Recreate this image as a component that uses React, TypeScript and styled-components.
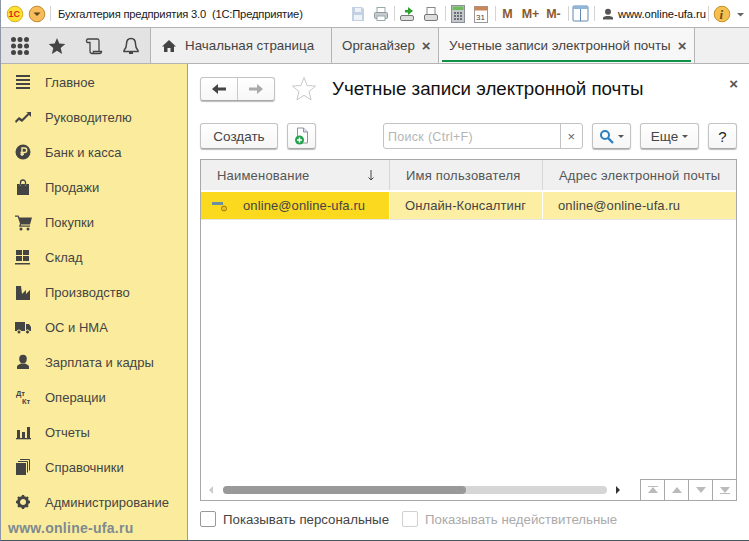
import React from "react";
import styled, { createGlobalStyle } from "styled-components";

const Global = createGlobalStyle`
  html, body { margin: 0; padding: 0; background: #fff; }
  * { box-sizing: border-box; }
  body { font-family: "Liberation Sans", Arial, sans-serif; }
`;

const Window = styled.div`
  position: relative;
  width: 749px;
  height: 541px;
  display: flex;
  flex-direction: column;
  overflow: hidden;
  background: #fff;
  border-left: 1px solid #8d97a8;
  border-bottom: 1px solid #44565f;
`;

const TitleBar = styled.div`
  height: 27px;
  display: flex;
  align-items: center;
  flex: none;
  position: relative;
  background: #fff;
`;
const TitleText = styled.span`
  font-size: 11.2px;
  color: #1a1a1a;
  white-space: pre;
  margin-left: 3px;
  width: 292px;
  letter-spacing: -0.19px;
`;
const Sep = styled.i<{ $l: number; $r: number }>`
  width: 1px;
  height: 15px;
  background: #d4d4d4;
  margin: 0 ${(p) => p.$r}px 0 ${(p) => p.$l}px;
  flex: none;
`;
const Gap = styled.i<{ $w: number }>`
  width: ${(p) => p.$w}px;
  flex: none;
`;
const TIcon = styled.svg`
  flex: none;
  display: block;
`;
const Mem = styled.b`
  font-size: 12.5px;
  color: #8a5a2f;
  font-weight: 700;
  width: 23px;
  text-align: center;
  flex: none;
`;
const UserName = styled.span`
  font-size: 11.2px;
  color: #111;
  margin-left: 4px;
  width: 85px;
  white-space: nowrap;
  letter-spacing: -0.06px;
`;

const TabBar = styled.div`
  height: 37px;
  flex: none;
  display: flex;
  background: #f0f0f0;
  border-top: 1px solid #b4b4b4;
  border-bottom: 1px solid #b4b4b4;
`;
const QuickIcons = styled.div`
  width: 150px;
  flex: none;
  background: #e3e3e3;
  border-right: 1px solid #b4b4b4;
  display: flex;
  align-items: center;
  padding-left: 10px;
  gap: 19px;
`;
const Tab = styled.div<{ $w: number; $active?: boolean }>`
  position: relative;
  width: ${(p) => p.$w}px;
  flex: none;
  display: flex;
  align-items: center;
  border-right: 1px solid #b4b4b4;
  padding-left: 10px;
  font-size: 13.35px;
  color: #444;
  background: ${(p) => (p.$active ? "#f7f7f7" : "transparent")};
  white-space: nowrap;
  &::after {
    content: "";
    display: ${(p) => (p.$active ? "block" : "none")};
    position: absolute;
    left: 3px;
    right: 3px;
    bottom: 1px;
    height: 2px;
    background: #0f9148;
  }
`;
const TabLabel = styled.span`
  margin-left: 8px;
`;
const TabClose = styled.span`
  margin-left: 7px;
  font-size: 15px;
  color: #555;
  font-weight: 700;
  line-height: 1;
`;

const Body = styled.div`
  flex: 1;
  display: flex;
  min-height: 0;
`;
const Sidebar = styled.nav`
  width: 187px;
  flex: none;
  background: #fbec9d;
  border-right: 1px solid #b7a62e;
  padding-top: 1px;
  display: flex;
  flex-direction: column;
`;
const NavRow = styled.div`
  height: 35px;
  flex: none;
  display: flex;
  align-items: center;
  font-size: 13px;
  color: #444;
  white-space: nowrap;
`;
const NavIcon = styled.span`
  width: 44px;
  flex: none;
  display: flex;
  justify-content: flex-start;
  padding-left: 14px;
`;
const Watermark = styled.div`
  position: absolute;
  left: 7px;
  bottom: 4px;
  font-size: 14px;
  font-weight: 700;
  color: #7d8a90;
  letter-spacing: 0.28px;
`;

const Main = styled.main`
  flex: 1;
  min-width: 0;
  padding: 13px 11px 0 12px;
  display: flex;
  flex-direction: column;
  position: relative;
`;
const Head = styled.div`
  height: 24px;
  display: flex;
  align-items: center;
  flex: none;
`;
const NavGroup = styled.div`
  display: flex;
  width: 75px;
  height: 24px;
  border: 1px solid #c3c3c3;
  border-bottom-color: #a9a9a9;
  border-radius: 3px;
  box-shadow: 0 1px 1px #bbb;
  background: linear-gradient(#fff, #f7f7f7);
`;
const NavPart = styled.div`
  flex: 1;
  display: flex;
  align-items: center;
  justify-content: center;
  & + & {
    border-left: 1px solid #c9c9c9;
  }
`;
const StarSlot = styled.div`
  margin-left: 17px;
`;
const Title = styled.h1`
  margin: 0 0 0 16px;
  font-size: 18.75px;
  font-weight: 400;
  color: #111;
  white-space: nowrap;
`;
const CloseForm = styled.span`
  position: absolute;
  right: 11px;
  top: 12px;
  font-size: 15px;
  font-weight: 700;
  color: #555;
  line-height: 1;
`;
const Toolbar = styled.div`
  margin-top: 22px;
  height: 26px;
  display: flex;
  align-items: stretch;
  flex: none;
`;
const Btn = styled.div<{ $w: number; $ml?: number; $strong?: boolean }>`
  width: ${(p) => p.$w}px;
  margin-left: ${(p) => p.$ml ?? 0}px;
  flex: none;
  border: 1px solid #c3c3c3;
  border-bottom-color: #a9a9a9;
  border-radius: 3px;
  box-shadow: 0 1px 1px #bbb;
  background: linear-gradient(#fff, #f6f6f6);
  display: flex;
  align-items: center;
  justify-content: center;
  gap: 4px;
  font-size: ${(p) => (p.$strong ? 15 : 13.5)}px;
  color: ${(p) => (p.$strong ? "#222" : "#444")};
`;
const Caret = styled.i`
  width: 0;
  height: 0;
  border-left: 3px solid transparent;
  border-right: 3px solid transparent;
  border-top: 3px solid #555;
  margin-top: 1px;
`;
const Search = styled.div`
  width: 200px;
  margin-left: 67px;
  flex: none;
  border: 1px solid #c3c3c3;
  border-radius: 3px;
  display: flex;
  font-size: 12.5px;
  color: #b5b5b5;
  letter-spacing: 0.3px;
`;
const SearchInput = styled.div`
  flex: 1;
  display: flex;
  align-items: center;
  padding: 2px 0 0 4px;
  border-right: 1px solid #c3c3c3;
`;
const SearchClear = styled.div`
  width: 21px;
  flex: none;
  display: flex;
  align-items: center;
  justify-content: center;
  padding-top: 1px;
  color: #666;
  font-size: 13px;
`;
const TableBox = styled.div`
  margin-top: 10px;
  width: 537px;
  height: 342px;
  flex: none;
  border: 1px solid #a8a8a8;
  display: flex;
  flex-direction: column;
`;
const HeadRow = styled.div`
  height: 31px;
  flex: none;
  display: grid;
  grid-template-columns: 188px 153px 1fr;
  background: #f0f0f0;
  border-bottom: 1px solid #fff;
`;
const HeadCell = styled.div`
  display: flex;
  align-items: center;
  justify-content: space-between;
  padding: 0 13px 0 16px;
  font-size: 13px;
  letter-spacing: 0.2px;
  color: #555;
  white-space: nowrap;
  & + & {
    border-left: 1px solid #d8d8d8;
  }
`;
const DataRow = styled.div`
  height: 28px;
  flex: none;
  display: grid;
  grid-template-columns: 188px 153px 1fr;
  margin-top: 1px;
  border-bottom: 1px solid #e6e6e6;
`;
const DataCell = styled.div<{ $current?: boolean }>`
  display: flex;
  align-items: center;
  background: ${(p) => (p.$current ? "#fbd91f" : "#fcefa4")};
  padding-left: ${(p) => (p.$current ? 11 : 15)}px;
  font-size: 13px;
  letter-spacing: 0.1px;
  color: #444;
  white-space: nowrap;
  border-left: ${(p) => (p.$current ? "0" : "1px solid #fff")};
`;
const RowIconText = styled.span`
  margin-left: 15px;
`;
const TableFill = styled.div`
  flex: 1;
`;
const TableBottom = styled.div`
  height: 21px;
  flex: none;
  display: flex;
  align-items: center;
`;
const ScrollArea = styled.div`
  flex: 1;
  display: flex;
  align-items: center;
  padding-left: 8px;
  gap: 9px;
`;
const ScrollTrack = styled.div`
  width: 384px;
  height: 8px;
  background: #d6d6d6;
  border-radius: 4px;
  flex: none;
`;
const ScrollThumb = styled.div`
  width: 243px;
  height: 8px;
  background: #999;
  border-radius: 4px;
`;
const PagerBtn = styled.div`
  width: 24px;
  height: 21px;
  flex: none;
  border-left: 1px solid #a8a8a8;
  border-top: 1px solid #a8a8a8;
  display: flex;
  align-items: center;
  justify-content: center;
`;
const Filters = styled.div`
  margin-top: 10px;
  display: flex;
  align-items: center;
  font-size: 13.25px;
  color: #444;
`;
const Check = styled.label<{ $off?: boolean }>`
  display: flex;
  align-items: center;
  gap: 7px;
  margin-right: 13px;
  color: ${(p) => (p.$off ? "#aaa" : "#444")};
  white-space: nowrap;
  &::before {
    content: "";
    width: 14px;
    height: 14px;
    border: 1px solid ${(p) => (p.$off ? "#d0d0d0" : "#999")};
    border-radius: 2px;
    background: #fff;
  }
`;

const C = "#444";
const Ico = ({ w = 18, h = 16, children }: { w?: number; h?: number; children: React.ReactNode }) => (
  <TIcon width={w} height={h} viewBox={`0 0 ${w} ${h}`}>{children}</TIcon>
);

const navItems: [string, React.ReactNode][] = [
  ["Главное", <g fill={C}><rect x="1" y="1" width="14" height="2" /><rect x="1" y="5" width="14" height="2" /><rect x="1" y="9" width="14" height="2" /><rect x="1" y="13" width="14" height="2" /></g>],
  ["Руководителю", <path d="M0 12l4-4 3 2 6-6-2-1h5v5l-2-2-7 7-3-2-3 3z" fill={C} />],
  ["Банк и касса", <g><circle cx="8" cy="8" r="7.5" fill={C} /><path d="M7 12V4h2.5a2 2 0 010 4.5H5.5M5.5 10.3H9" stroke="#fbec9d" strokeWidth="1.4" fill="none" /></g>],
  ["Продажи", <g><path d="M2 5h2.500l1 2 .8-2h3.400l.8 2 1-2H14v11H2z" fill={C} /><path d="M5.500 6V3.500a2.500 2.500 0 015 0V6" stroke={C} strokeWidth="1.300" fill="none" /></g>],
  ["Покупки", <g fill={C}><path d="M0 1.500h3.500l1 2H17l-2 7H6l-.3 1h9.300v1.200H4L5 9.500 2.700 2.700H0z" /><circle cx="6" cy="15" r="1.500" /><circle cx="13" cy="15" r="1.500" /></g>],
  ["Склад", <g fill={C}><rect x="1" y="1" width="6" height="5" /><rect x="8" y="1" width="6" height="5" /><rect x="1" y="7" width="6" height="5" /><rect x="8" y="7" width="6" height="5" /><rect x="0" y="14" width="15" height="1.5" /></g>],
  ["Производство", <path d="M1 16V2h5l1 8 4-4v4l4-4v10z" fill={C} />],
  ["ОС и НМА", <g fill={C}><rect x="0" y="3" width="10" height="9" /><path d="M11 5h3l2 3v4h-5z" /><circle cx="4" cy="13" r="2" stroke="#fbec9d" /><circle cx="12.5" cy="13" r="2" stroke="#fbec9d" /></g>],
  ["Зарплата и кадры", <g fill={C}><ellipse cx="8" cy="5" rx="3.8" ry="4.2" /><path d="M2 15v-2.500c0-1.500 3-2.500 4-3h4c1 .5 4 1.500 4 3V15z" /></g>],
  ["Операции", <g fill={C}><text x="1" y="7" fontSize="7.5" fontWeight="700" fontFamily="Liberation Sans">Дт</text><text x="7" y="15" fontSize="7.5" fontWeight="700" fontFamily="Liberation Sans">Кт</text></g>],
  ["Отчеты", <g fill={C}><rect x="2" y="6" width="3" height="8" /><rect x="7" y="8" width="3" height="6" /><rect x="12" y="3" width="3" height="11" /><rect x="1" y="14" width="15" height="1.300" /></g>],
  ["Справочники", <g><rect x="1" y="4" width="10" height="12" fill={C} /><path d="M3 2.500h9.500v11M5 .5h9.500v11" stroke={C} fill="none" /></g>],
  ["Администрирование", <g><circle cx="8" cy="8" r="4.500" fill="none" stroke={C} strokeWidth="3" /><path d="M8 1v14M1 8h14M3 3l10 10M13 3L3 13" stroke={C} strokeWidth="2.400" strokeDasharray="2.600 8.800" /></g>],
];

export default function App() {
  return (
    <Window>
      <Global />
      <TitleBar>
        <Gap $w={5} />
        <Ico w={18} h={18}>
          <circle cx="9" cy="9" r="7.800" fill="#ffe135" stroke="#d8b020" />
          <text x="2.500" y="12" fontSize="9" fontWeight="700" fill="#e0261c" fontFamily="Liberation Sans">1С</text>
        </Ico>
        <Gap $w={4} />
        <Ico w={18} h={18}>
          <circle cx="9" cy="9" r="7.800" fill="#f7bd5a" stroke="#c48a30" />
          <path d="M5.500 7.500h7L9 11z" fill="#5a4020" />
        </Ico>
        <Sep $l={4} $r={4} />
        <TitleText>Бухгалтерия предприятия 3.0  (1С:Предприятие)</TitleText>
        <Ico w={16} h={16}><path d="M2 1h10l2 2v12H2z" fill="#c3d1e3" /><rect x="5" y="2" width="6" height="4" fill="#eef3f8" /><rect x="4" y="9" width="8" height="5" fill="#eef3f8" /></Ico>
        <Gap $w={7} />
        <Ico w={16} h={16}><rect x="4" y="1.500" width="8" height="5" fill="#fff" stroke="#9aa" /><rect x="1.500" y="6.500" width="13" height="6" rx="1" fill="#c8ccd0" stroke="#8f979c" /><rect x="4" y="10" width="8" height="4.500" fill="#fff" stroke="#9aa" /></Ico>
        <Sep $l={5} $r={3} />
        <Ico w={18} h={16}><path d="M7 4h3V1l5 4-5 4V6.500H7z" fill="#2ea02e" /><rect x="2.500" y="9.500" width="13" height="5" rx="1.500" fill="#ddd" stroke="#777" /></Ico>
        <Gap $w={6} />
        <Ico w={18} h={16}><rect x="5" y="1.500" width="8" height="8" fill="#fff" stroke="#888" /><rect x="2.500" y="8.500" width="13" height="6" rx="1.500" fill="#ddd" stroke="#777" /></Ico>
        <Sep $l={5} $r={5} />
        <Ico w={14} h={18}><rect x=".5" y=".5" width="13" height="17" fill="#c4c8cc" stroke="#8a9096" /><rect x="1.500" y="1.500" width="11" height="3.500" fill="#6fba5c" /><g fill="#6a6f74"><rect x="3" y="7" width="2" height="2" /><rect x="6" y="7" width="2" height="2" /><rect x="9" y="7" width="2" height="2" /><rect x="3" y="10" width="2" height="2" /><rect x="6" y="10" width="2" height="2" /><rect x="9" y="10" width="2" height="2" /><rect x="3" y="13" width="2" height="2" /><rect x="6" y="13" width="2" height="2" /><rect x="9" y="13" width="2" height="2" /></g></Ico>
        <Gap $w={9} />
        <Ico w={14} h={18}><rect x=".5" y="1.500" width="13" height="16" fill="#fff" stroke="#9a9a9a" /><rect x=".5" y="1.500" width="13" height="4" fill="#c8875a" /><text x="2" y="15" fontSize="8" fill="#444" fontFamily="Liberation Sans">31</text></Ico>
        <Sep $l={7} $r={0} />
        <Mem>М</Mem>
        <Mem>М+</Mem>
        <Mem>М-</Mem>
        <Sep $l={3} $r={3} />
        <Ico w={17} h={17}><rect x="1" y="1" width="15" height="15" rx="1" fill="#fff" stroke="#5f88b0" /><rect x="1" y="1" width="15" height="3" fill="#8fb6d8" /><path d="M8.500 4v12" stroke="#5f88b0" /></Ico>
        <Sep $l={5} $r={7} />
        <Ico w={12} h={12}><circle cx="6" cy="3.800" r="3" fill="#555" /><path d="M1 11.500V10c0-1.500 3-2 5-2s5 .5 5 2v1.500z" fill="#555" /></Ico>
        <UserName>www.online-ufa.ru</UserName>
        <Sep $l={5} $r={4} />
        <Ico w={18} h={18}><circle cx="9" cy="9" r="7.800" fill="#f6c04e" stroke="#c89030" /><text x="6.500" y="14" fontSize="13" fontWeight="700" fontStyle="italic" fill="#6a4a18" fontFamily="Liberation Serif">i</text></Ico>
        <Ico w={16} h={16}><path d="M6 7h7l-3.500 3.500z" fill="#666" /></Ico>
      </TitleBar>
      <TabBar>
        <QuickIcons>
          <Ico w={18} h={18}><g fill="#444">{[2.5, 9, 15.5].flatMap((y) => [2.5, 9, 15.5].map((x) => <circle key={`${x}-${y}`} cx={x} cy={y} r="2.500" />))}</g></Ico>
          <Ico w={18} h={18}><path d="M9 1l2.300 5.600 6 .5-4.600 3.900 1.400 5.900L9 13.800 3.900 16.900l1.400-5.900L.7 7.100l6-.5z" fill="#444" /></Ico>
          <Ico w={18} h={18}><path d="M3 2h9.500c1 0 1.500.8 1.500 2v10.500M3 2C1.800 2 1.500 3 1.500 4S2 5.500 3.500 5.500H5V14c0 1.500.8 2.500 2 2.500h7.500c1.300 0 2-1 2-2h-8c0 1-.5 2-1.500 2" fill="none" stroke="#444" strokeWidth="1.300" /></Ico>
          <Ico w={18} h={18}><path d="M9 1.500c-3 0-4.500 2.500-4.500 5.500 0 3-1 5-2.500 6.500v1h14v-1C14.500 12 13.500 10 13.500 7c0-3-1.500-5.500-4.500-5.500z" fill="none" stroke="#444" strokeWidth="1.500" /><path d="M7 16h4" stroke="#444" strokeWidth="2" /></Ico>
        </QuickIcons>
        <Tab $w={181}>
          <Ico w={16} h={14}><path d="M8 1L1 7.500h2V13h3.500V9h3v4H13V7.500h2z" fill="#444" /></Ico>
          <TabLabel>Начальная страница</TabLabel>
        </Tab>
        <Tab $w={107}>Органайзер<TabClose>×</TabClose></Tab>
        <Tab $w={256} $active>Учетные записи электронной почты<TabClose>×</TabClose></Tab>
      </TabBar>
      <Body>
        <Sidebar>
          {navItems.map(([label, icon]) => (
            <NavRow key={label}>
              <NavIcon><Ico w={17} h={17}>{icon}</Ico></NavIcon>
              {label}
            </NavRow>
          ))}
        </Sidebar>
        <Main>
          <Head>
            <NavGroup>
              <NavPart><Ico w={16} h={12}><path d="M1 6l6-5v3.500h8v3H7V11z" fill="#444" /></Ico></NavPart>
              <NavPart><Ico w={16} h={12}><path d="M15 6L9 1v3.500H1v3h8V11z" fill="#aaa" /></Ico></NavPart>
            </NavGroup>
            <StarSlot><Ico w={24} h={24}><path d="M12 .5l3.100 8 8.400.6-6.500 5.400 2.100 8.300L12 18.300l-7.100 4.500L7 14.500.5 9.100l8.400-.6z" fill="#fff" stroke="#c8c8c8" /></Ico></StarSlot>
            <Title>Учетные записи электронной почты</Title>
            <CloseForm>×</CloseForm>
          </Head>
          <Toolbar>
            <Btn $w={78}>Создать</Btn>
            <Btn $w={29} $ml={9}>
              <Ico w={16} h={18}><path d="M3.500 1h6l4 4v11h-10z" fill="#fff" stroke="#8a94a0" /><path d="M9.500 1v4h4" fill="#dde" stroke="#8a94a0" /><circle cx="5.500" cy="13" r="4.500" fill="#23a24d" /><path d="M5.500 10.500v5M3 13h5" stroke="#fff" strokeWidth="1.500" /></Ico>
            </Btn>
            <Search>
              <SearchInput>Поиск (Ctrl+F)</SearchInput>
              <SearchClear>×</SearchClear>
            </Search>
            <Btn $w={39} $ml={9}>
              <Ico w={15} h={15}><circle cx="6" cy="6" r="4" fill="none" stroke="#2c7fc0" strokeWidth="2" /><path d="M9 9l5 5" stroke="#2c7fc0" strokeWidth="2.400" /></Ico>
              <Caret />
            </Btn>
            <Btn $w={59} $ml={9}>Еще<Caret /></Btn>
            <Btn $w={29} $ml={9} $strong>?</Btn>
          </Toolbar>
          <TableBox>
            <HeadRow>
              <HeadCell>Наименование<Ico w={10} h={12}><path d="M5 1v10M2.500 8.500L5 11l2.500-2.500" fill="none" stroke="#444" /></Ico></HeadCell>
              <HeadCell>Имя пользователя</HeadCell>
              <HeadCell>Адрес электронной почты</HeadCell>
            </HeadRow>
            <DataRow>
              <DataCell $current>
                <Ico w={16} h={14}><rect x="0" y="3" width="11" height="3" fill="#6a8fa0" /><circle cx="12" cy="9.500" r="2.500" fill="#f0c020" stroke="#9a7a10" /></Ico>
                <RowIconText>online@online-ufa.ru</RowIconText>
              </DataCell>
              <DataCell>Онлайн-Консалтинг</DataCell>
              <DataCell>online@online-ufa.ru</DataCell>
            </DataRow>
            <TableFill />
            <TableBottom>
              <ScrollArea>
                <Ico w={5} h={8}><path d="M4 0v8L0 4z" fill="#ccc" /></Ico>
                <ScrollTrack><ScrollThumb /></ScrollTrack>
                <Ico w={5} h={8}><path d="M0 0v8l4-4z" fill="#333" /></Ico>
              </ScrollArea>
              <PagerBtn><Ico w={12} h={8}><path d="M1 0h10v1H1zM6 1l5 6H1z" fill="#bbb" /></Ico></PagerBtn>
              <PagerBtn><Ico w={12} h={8}><path d="M6 1l5 6H1z" fill="#bbb" /></Ico></PagerBtn>
              <PagerBtn><Ico w={12} h={8}><path d="M6 7l5-6H1z" fill="#bbb" /></Ico></PagerBtn>
              <PagerBtn><Ico w={12} h={8}><path d="M1 7h10v1H1zM6 7l5-6H1z" fill="#bbb" /></Ico></PagerBtn>
            </TableBottom>
          </TableBox>
          <Filters>
            <Check>Показывать персональные</Check>
            <Check $off>Показывать недействительные</Check>
          </Filters>
        </Main>
      </Body>
      <Watermark>www.online-ufa.ru</Watermark>
    </Window>
  );
}
